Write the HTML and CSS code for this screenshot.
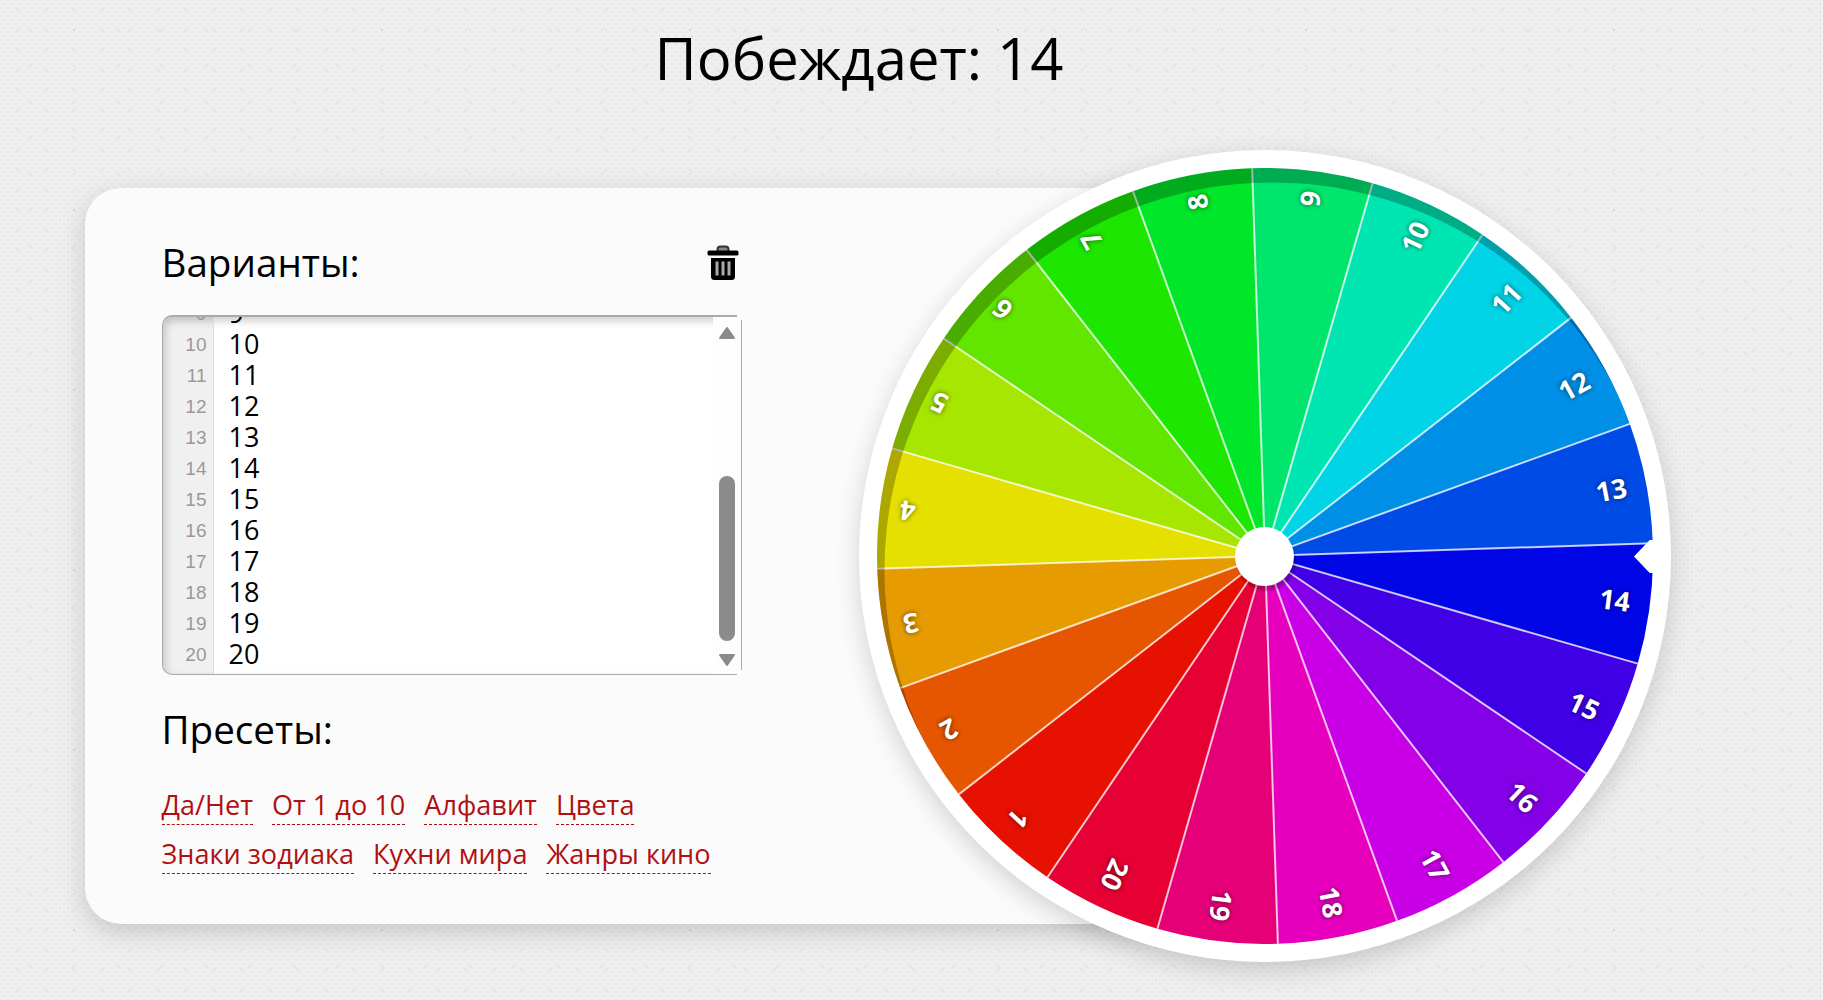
FILE: index.html
```html
<!DOCTYPE html>
<html lang="ru">
<head>
  <meta charset="UTF-8">
  <meta name="viewport" content="width=device-width, initial-scale=1.0">
  <title>Колесо фортуны</title>
  <link rel="stylesheet" href="styles.css">
</head>
<body>
  <h1 class="result">Побеждает: 14</h1>

  <main class="game">
    <section class="card">
      <div class="card-header">
        <h2>Варианты:</h2>
        <button class="clear-btn" aria-label="Очистить">
          <svg width="32" height="36" viewBox="0 0 32 36">
            <path d="M10.5 6V4.500Q10.5 1.500 13.5 1.500H18.5Q21.5 1.500 21.5 4.500V6" fill="#888" stroke="#333" stroke-width="2"/>
            <rect x="0.500" y="5.500" width="31" height="5" rx="1.500" fill="#000"/>
            <path d="M4 13H28V31.500Q28 35 24.500 35H7.500Q4 35 4 31.500Z" fill="#000"/>
            <path d="M10 16.500V30.500M16 16.500V30.500M22 16.500V30.500" stroke="#aaa" stroke-width="3"/>
          </svg>
        </button>
      </div>

      <div class="editor">
        <div class="gutter" id="gutter"></div>
        <div class="lines" id="lines"></div>
        <div class="scrollbar">
          <svg width="18" height="14" viewBox="0 0 18 14"><path d="M9 2L16 12H2Z"/></svg>
          <div class="track"><div class="thumb"></div></div>
          <svg width="18" height="14" viewBox="0 0 18 14"><path d="M9 12L2 2H16Z"/></svg>
        </div>
      </div>

      <h2 class="presets-title">Пресеты:</h2>
      <div class="presets">
        <a>Да/Нет</a>
        <a>От 1 до 10</a>
        <a>Алфавит</a>
        <a>Цвета</a>
        <a>Знаки зодиака</a>
        <a>Кухни мира</a>
        <a>Жанры кино</a>
      </div>
    </section>

    <div class="wheel">
      <svg class="sectors" id="sectors" viewBox="-388 -388 776 776"></svg>
      <div class="shade"></div>
      <div class="hub"></div>
      <div class="pointer"></div>
    </div>
  </main>

  <script>
    const count = 20;
    const step = 360 / count;
    const radius = 388;
    const rotation = 124.1; // where the wheel stopped

    function point(angle) {
      const rad = angle * Math.PI / 180;
      return (radius * Math.cos(rad)).toFixed(2) + ' ' + (radius * Math.sin(rad)).toFixed(2);
    }

    // Editor rows, scrolled to the end
    let rows = '';
    for (let i = 9; i <= count; i++) {
      rows += `<div class="row">${i}</div>`;
    }
    document.getElementById('gutter').innerHTML = rows;
    document.getElementById('lines').innerHTML = rows;

    // Wheel sectors, dividers and labels
    let sectors = '';
    let dividers = '';
    let labels = '';
    for (let i = 0; i < count; i++) {
      const start = rotation + i * step;
      const middle = start + step / 2;
      sectors += `<path d="M0 0L${point(start)}A${radius} ${radius} 0 0 1 ${point(start + step)}Z" fill="hsl(${4.5 + i * step}, 100%, 45%)"/>`;
      dividers += `<path class="divider" d="M0 0L${point(start)}"/>`;
      labels += `<text class="label" x="368" y="10.5" transform="rotate(${middle})">${i + 1}</text>`;
    }
    document.getElementById('sectors').innerHTML = sectors + dividers + labels;
  </script>
</body>
</html>
```

FILE: styles.css
```css
* {
  box-sizing: border-box;
}

body {
  margin: 0;
  height: 1000px;
  overflow: hidden;
  font-family: 'Open Sans', 'Noto Sans', sans-serif;
  color: #000;
  background-color: #efefef;
  background-image:
    radial-gradient(circle, rgba(0, 0, 0, 0.05) 0.7px, transparent 1.4px),
    radial-gradient(circle, rgba(0, 0, 0, 0.04) 0.7px, transparent 1.4px),
    radial-gradient(circle, rgba(0, 0, 0, 0.05) 0.7px, transparent 1.5px),
    radial-gradient(circle, rgba(0, 0, 0, 0.05) 0.7px, transparent 1.5px);
  background-size: 8px 8px, 8px 8px, 28px 20px, 44px 36px;
  background-position: 0 0, 4px 4px, 4px 0, 8px 12px;
}

h1,
h2 {
  margin: 0;
  font-weight: 400;
}

.result {
  height: 150px;
  padding: 18px 105px 0 0;
  font-size: 58px;
  line-height: 80px;
  text-align: center;
}

.game {
  display: flex;
  align-items: flex-start;
  padding-left: 85px;
}

.card {
  width: 1180px;
  height: 736px;
  margin-top: 38px;
  padding: 48px 0 0 76.5px;
  background: #fbfbfb;
  border-radius: 36px;
  box-shadow: 0 8px 26px rgba(0, 0, 0, 0.17);
}

.card-header {
  display: flex;
  justify-content: space-between;
  align-items: center;
  width: 577px;
  height: 52px;
}

h2 {
  font-size: 38.6px;
  line-height: 52px;
}

.clear-btn {
  padding: 2px 0 0;
  border: none;
  background: none;
  cursor: pointer;
}

.clear-btn svg {
  display: block;
}

.editor {
  position: relative;
  display: flex;
  width: 580px;
  height: 360px;
  margin-top: 27px;
  background: #fff;
  border: 1px solid #aaa;
  border-top: 2px solid #aaa;
  border-radius: 10px 0 0 10px;
  box-shadow: inset 2px 4px 8px rgba(0, 0, 0, 0.2);
}

/* The frame stays open at both right corners */
.editor::before,
.editor::after {
  content: '';
  position: absolute;
  right: -1px;
  width: 5px;
  height: 5px;
  background: #fdfdfd;
}

.editor::before {
  top: -2px;
}

.editor::after {
  bottom: -1px;
}

.gutter,
.lines {
  display: flex;
  flex-direction: column;
  justify-content: flex-end;
  overflow: hidden;
}

.row {
  flex-shrink: 0;
  height: 31px;
}

.gutter {
  width: 51px;
  padding: 0 6px 4px 0;
  font: 19px/31px 'Liberation Sans', Arial, sans-serif;
  color: #999;
  text-align: right;
  background: rgba(0, 0, 0, 0.06);
  border-right: 1px solid #ddd;
  border-radius: 9px 0 0 9px;
}

.lines {
  flex: 1;
  padding: 0 0 5px 15px;
  font-size: 27px;
  line-height: 31px;
}

.scrollbar {
  display: flex;
  flex-direction: column;
  align-items: center;
  width: 28px;
  padding: 9px 0 7px;
  background: #fdfdfd;
}

.scrollbar svg {
  display: block;
  fill: #8b8b8b;
  stroke: #8b8b8b;
  stroke-width: 2;
  stroke-linejoin: round;
}

.track {
  flex: 1;
  display: flex;
  align-items: flex-end;
  padding-bottom: 12px;
}

.thumb {
  width: 16px;
  height: 165px;
  background: #8b8b8b;
  border-radius: 8px;
}

.presets-title {
  margin-top: 28px;
}

.presets {
  display: flex;
  flex-wrap: wrap;
  gap: 12px 19px;
  width: 590px;
  margin-top: 33px;
}

.presets a {
  padding-bottom: 3px;
  font-size: 27.1px;
  line-height: 33px;
  color: #b01010;
  border-bottom: 1.500px dashed #b01010;
  cursor: pointer;
}

.wheel {
  position: relative;
  flex-shrink: 0;
  width: 812px;
  height: 812px;
  margin-left: -406px;
  padding: 18px;
  background: #fff;
  border-radius: 50%;
  box-shadow: 0 8px 26px rgba(0, 0, 0, 0.17);
}

.sectors {
  display: block;
  width: 776px;
  height: 776px;
}

.divider {
  stroke: rgba(255, 255, 255, 0.75);
  stroke-width: 2;
}

.label {
  font-size: 27px;
  font-weight: 700;
  fill: #fff;
  text-anchor: end;
  text-shadow: 0 0 5px rgba(0, 0, 0, 0.6);
}

/* Overlays on the wheel */
.shade {
  position: absolute;
  inset: 18px;
  border-radius: 50%;
  box-shadow: inset 7.500px 14.500px 0 rgba(0, 0, 0, 0.25);
}

.hub {
  position: absolute;
  top: 377px;
  left: 376px;
  width: 59px;
  height: 59px;
  background: #fff;
  border-radius: 50%;
  box-shadow: 2px 5px 2px rgba(0, 0, 0, 0.25);
}

.pointer {
  position: absolute;
  top: 390px;
  right: 16px;
  width: 21px;
  height: 33px;
  background: #fff;
  clip-path: polygon(0 50%, 75% 0, 100% 0, 100% 100%, 75% 100%);
}
```
